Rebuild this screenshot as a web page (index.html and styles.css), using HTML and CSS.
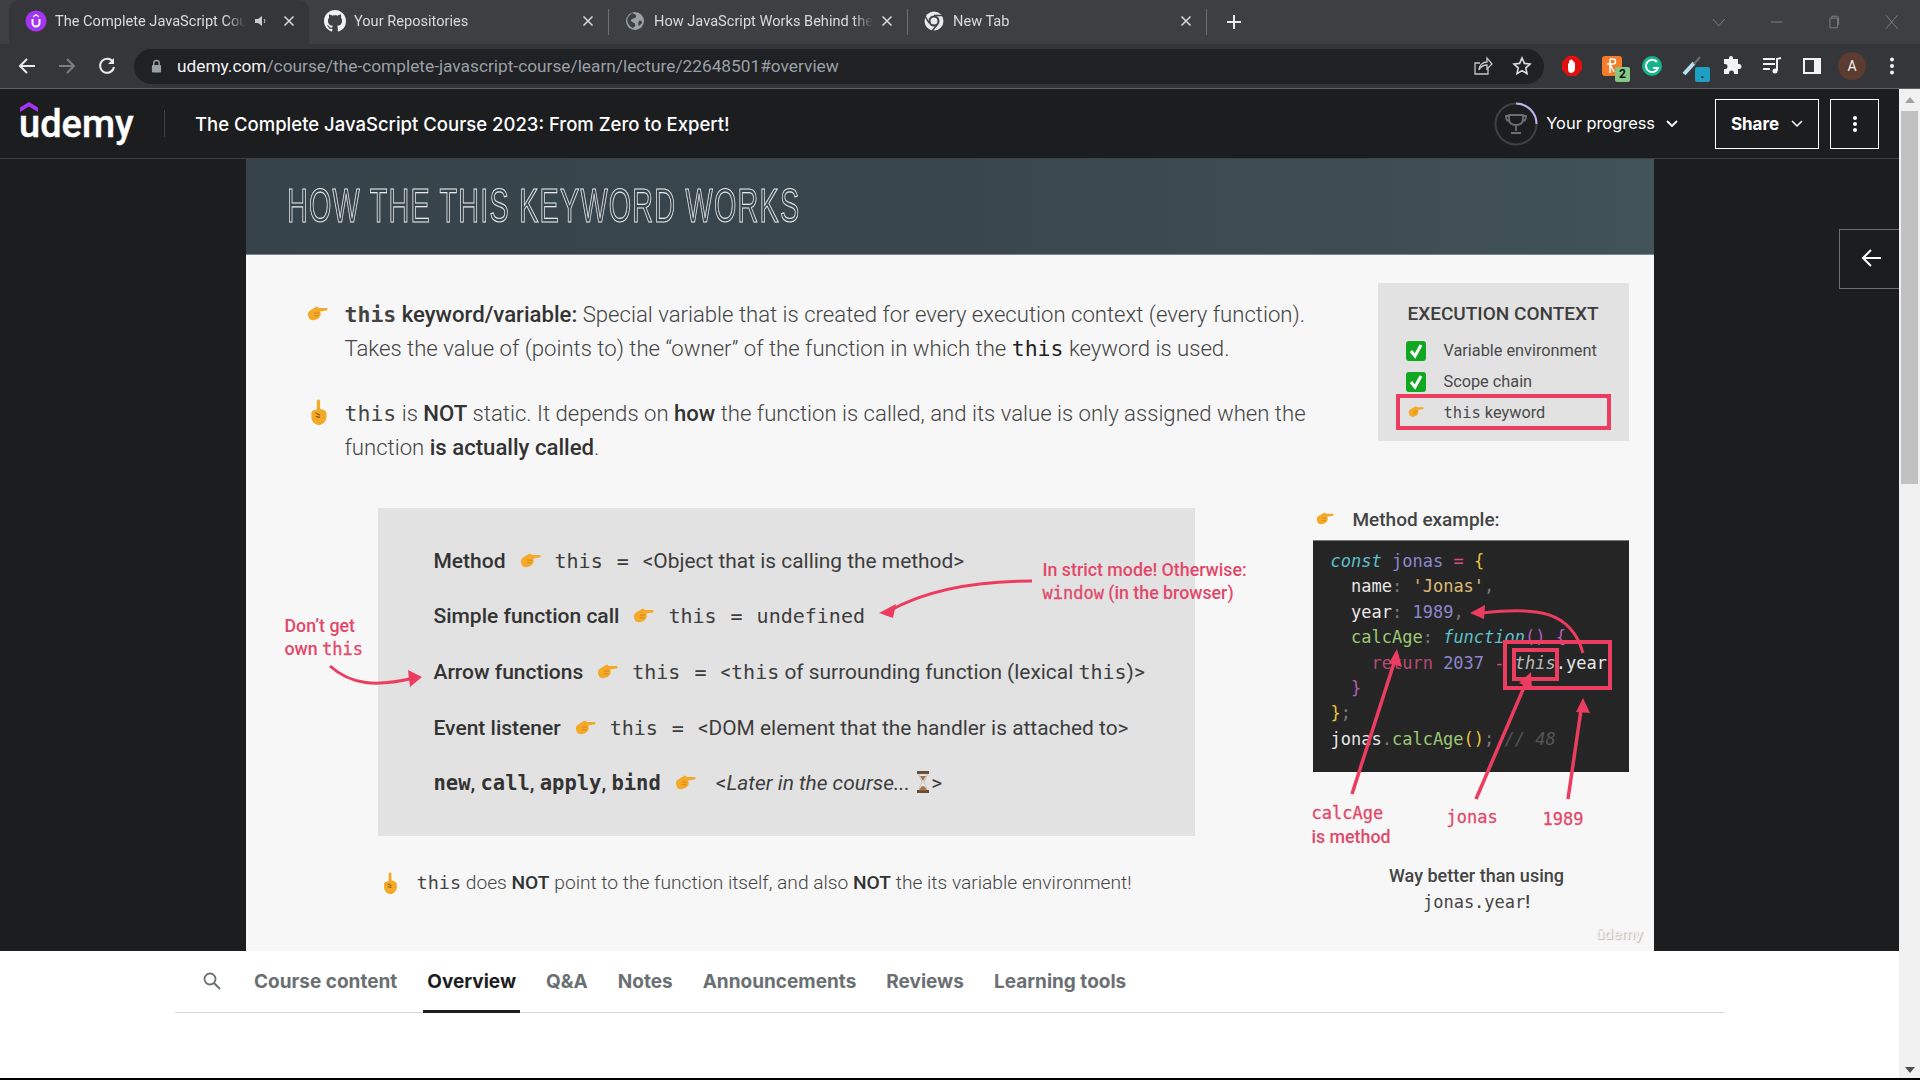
FILE: index.html
```html
<!DOCTYPE html>
<html>
  <head>
    <title>The Complete JavaScript Course</title>
    <link rel="stylesheet" href="styles.css">
  </head>
  <body>
    <svg class="sprites" width="0" height="0">
      <symbol id="handRight" viewBox="0 0 24 18">
        <path fill="#f4a928" d="M1 9c0-2 2-4 4-5l5-3c2-1 3 0 3 1l9 0c2 0 2 3 0 3l-7 1c1 2 1 5-1 7-2 2-5 3-8 3l-3-1c-1-2-2-4-2-6z"/>
        <path fill="none" stroke="#c97f12" stroke-width=".9" d="M8 8h6M8 11h5"/>
      </symbol>
      <symbol id="handUp" viewBox="0 0 16 24">
        <path fill="#f4a928" d="M6 2c0-2 3-2 3 0l0 7 3 1c3 1 3 3 3 6 0 4-3 8-7 8-4 0-6-3-7-6l0-5c0-2 2-3 5-3z"/>
        <path fill="none" stroke="#8a5a10" stroke-width="1.100" d="M5 13l4 2M5 16l4 1"/>
      </symbol>
      <symbol id="checkBox" viewBox="0 0 20 20">
        <rect width="20" height="20" rx="3" fill="#10a820"/>
        <path fill="none" stroke="#fff" stroke-width="3" d="M5 10l4 5 6-11"/>
      </symbol>
      <symbol id="closeX" viewBox="0 0 12 12">
        <path fill="none" stroke="currentColor" stroke-width="1.5" d="M1.500 1.500l9 9M10.500 1.500l-9 9"/>
      </symbol>
    </svg>

    <div class="tabStrip">
      <div class="tab tabActive">
        <svg class="tabIcon" viewBox="0 0 22 22"><circle cx="11" cy="11" r="10.500" fill="#a435f0"/><path fill="none" stroke="#fff" stroke-width="2" d="M7.500 9v4a3.500 3.500 0 0 0 7 0V9"/><path fill="#fff" d="M11 4l3 2v1.500l-3-2-3 2V6z"/></svg>
        <span class="tabTitle">The Complete JavaScript Cou</span>
        <svg class="tabSpeaker" viewBox="0 0 14 14"><path fill="#c8cacc" d="M1 5h3l4-3v10L4 9H1z"/><path fill="none" stroke="#c8cacc" d="M10 5c1 1 1 3 0 4"/></svg>
        <svg class="tabClose"><use href="#closeX"/></svg>
      </div>
      <div class="tab">
        <svg class="tabIcon" viewBox="0 0 16 16"><path fill="#f1f1f1" d="M8 0C3.580 0 0 3.580 0 8c0 3.540 2.290 6.530 5.470 7.590.4.070.55-.17.55-.38 0-.19-.01-.82-.01-1.490-2.010.37-2.530-.49-2.690-.94-.09-.23-.48-.94-.82-1.130-.28-.15-.68-.52-.01-.53.63-.01 1.080.58 1.230.82.720 1.210 1.870.87 2.330.66.070-.52.280-.87.510-1.070-1.780-.2-3.640-.89-3.640-3.950 0-.87.310-1.590.820-2.150-.08-.2-.36-1.020.08-2.120 0 0 .67-.21 2.200.82.640-.18 1.320-.27 2-.27s1.360.09 2 .27c1.530-1.040 2.200-.82 2.200-.82.440 1.100.16 1.920.08 2.120.51.560.820 1.270.820 2.150 0 3.070-1.870 3.750-3.650 3.950.290.25.540.73.540 1.480 0 1.070-.01 1.930-.01 2.200 0 .21.150.46.550.38A8.013 8.013 0 0 0 16 8c0-4.420-3.580-8-8-8z"/></svg>
        <span class="tabTitle">Your Repositories</span>
        <svg class="tabClose"><use href="#closeX"/></svg>
      </div>
      <div class="tabSep"></div>
      <div class="tab">
        <svg class="tabIcon" viewBox="0 0 22 22"><circle cx="11" cy="11" r="9" fill="#9aa0a6"/><path fill="#3c4043" d="M8 3c3 1 5 2 4 4s-4 1-5 3 3 2 4 4-1 3-2 4C5 16 2 12 4 7zM15 11c2-1 3 0 3 2l-3 3c-1-1-1-3 0-5z"/></svg>
        <span class="tabTitle">How JavaScript Works Behind the</span>
        <svg class="tabClose"><use href="#closeX"/></svg>
      </div>
      <div class="tabSep"></div>
      <div class="tab">
        <svg class="tabIcon" viewBox="0 0 22 22"><circle cx="11" cy="11" r="9.500" fill="#e8eaed"/><circle cx="11" cy="11" r="5.500" fill="#3c4043"/><circle cx="11" cy="11" r="3.500" fill="#e8eaed"/><path stroke="#3c4043" stroke-width="1.500" d="M11 5.500h9M6 13L2 6M14 15l-5 6"/></svg>
        <span class="tabTitle">New Tab</span>
        <svg class="tabClose"><use href="#closeX"/></svg>
      </div>
      <div class="tabSep"></div>
      <svg class="newTab" viewBox="0 0 16 16"><path stroke="#e8eaed" stroke-width="2" d="M8 1v14M1 8h14"/></svg>
      <div class="windowControls">
        <svg viewBox="0 0 14 14"><path fill="none" stroke="#7d8083" d="M1 4l6 7 6-7"/></svg>
        <svg viewBox="0 0 14 14"><path stroke="#7d8083" d="M1 7h12"/></svg>
        <svg viewBox="0 0 14 14"><path fill="none" stroke="#7d8083" d="M3 3h8v10H3zM5 3V1h6l1 1v8"/></svg>
        <svg viewBox="0 0 14 14"><path stroke="#7d8083" d="M1 0l12 14M13 0L1 14"/></svg>
      </div>
    </div>

    <div class="toolbar">
      <svg class="navIcon" viewBox="0 0 18 18"><path fill="none" stroke="#e8eaed" stroke-width="2" d="M17 9H3M9 2L2 9l7 7"/></svg>
      <svg class="navIcon" viewBox="0 0 18 18"><path fill="none" stroke="#7c7f82" stroke-width="2" d="M1 9h14M9 2l7 7-7 7"/></svg>
      <svg class="navIcon" viewBox="0 0 18 18"><path fill="none" stroke="#e8eaed" stroke-width="2" d="M15 5a7 7 0 1 0 1 5"/><path fill="#e8eaed" d="M16 1v6h-6z"/></svg>
      <div class="omnibox">
        <svg class="lockIcon" viewBox="0 0 12 14"><path fill="none" stroke="#9aa0a6" stroke-width="1.500" d="M3 6V4a3 3 0 0 1 6 0v2"/><rect x="1" y="6" width="10" height="8" rx="1" fill="#9aa0a6"/></svg>
        <span class="url"><span class="urlHost">udemy.com</span>/course/the-complete-javascript-course/learn/lecture/22648501#overview</span>
        <svg class="omniIcon omniShare" viewBox="0 0 20 20"><path fill="none" stroke="#c4c7c9" stroke-width="1.300" d="M15 12v6H2V7h5M6 14c0-5 4-8 8-8V2l5 6-5 5V9c-3 0-6 1-8 5z"/></svg>
        <svg class="omniIcon" viewBox="0 0 20 20"><path fill="none" stroke="#dcdee0" stroke-width="1.600" d="M10 2l2.400 5.400 5.600.6-4.200 3.800 1.200 5.800-5-3-5 3 1.200-5.800L2 8l5.600-.6z"/></svg>
      </div>
      <div class="extensions">
        <div class="ext"><svg viewBox="0 0 20 20"><path fill="#e20f0f" d="M6 0h8l6 6v8l-6 6H6l-6-6V6z"/><path fill="#fff" d="M6 8c0-1 1-1 1 0V5c0-1 1.500-1 1.500 0V4c0-1 1.500-1 1.500 0v1c0-1 1.500-1 1.500 0v2c0-1 1.500-1 1.500 0v6c0 2-2 4-4 4s-3-2-3-4z"/></svg></div>
        <div class="ext"><svg viewBox="0 0 20 20"><rect width="20" height="20" rx="3" fill="#f47c2a"/><path fill="none" stroke="#fff" stroke-width="1.500" d="M8 3v14M5 8h6a2 2 0 0 0 0-5H8M8 8l4 8"/></svg><span class="extBadge extBadgeGreen">2</span></div>
        <div class="ext"><svg viewBox="0 0 20 20"><circle cx="10" cy="10" r="10" fill="#15b58c"/><path fill="none" stroke="#fff" stroke-width="2" d="M15 6a6.200 6.200 0 1 0 1 6h-5"/></svg></div>
        <div class="ext"><svg viewBox="0 0 20 20"><path stroke="#b9dff0" stroke-width="4" d="M2 18L12 7"/><path stroke="#6a6f73" stroke-width="2" d="M12 8l6-7"/></svg><span class="extBadge extBadgeBlue">.</span></div>
        <div class="ext"><svg viewBox="0 0 20 20"><path fill="#f1f3f4" d="M7 2a2 2 0 0 1 4 0v1h5v5h1a2.500 2.500 0 0 1 0 5h-1v5h-4v-1a2.500 2.500 0 0 0-5 0v1H2v-5h1a2.500 2.500 0 0 0 0-5H2V3h5z"/></svg></div>
        <div class="ext"><svg viewBox="0 0 20 20"><path stroke="#f1f3f4" stroke-width="2" fill="none" d="M1 3h12M1 8h12M1 13h7M15 15V3l4-1"/><circle cx="13" cy="15" r="2.500" fill="#f1f3f4"/></svg></div>
        <div class="ext"><svg viewBox="0 0 20 20"><path fill="none" stroke="#f1f3f4" stroke-width="2" d="M2 3h16v14H2z"/><path fill="#f1f3f4" d="M12 3h6v14h-6z"/></svg></div>
        <div class="ext"><span class="avatar">A</span></div>
        <div class="ext"><svg viewBox="0 0 20 20"><circle cx="10" cy="3.500" r="2" fill="#f1f3f4"/><circle cx="10" cy="10" r="2" fill="#f1f3f4"/><circle cx="10" cy="16.500" r="2" fill="#f1f3f4"/></svg></div>
      </div>
    </div>

    <div class="page">
      <div class="pageMain">
        <header class="courseHeader">
          <div class="logo">
            <svg class="logoMark" viewBox="0 0 18 10"><path fill="#a435f0" d="M9 0l9 5.500V10L9 4.500 0 10V5.500z"/></svg>
            <span class="logoText">udemy</span>
          </div>
          <div class="headerDivider"></div>
          <div class="courseTitle">The Complete JavaScript Course 2023: From Zero to Expert!</div>
          <div class="progressRing">
            <svg viewBox="0 0 44 44" width="44" height="44">
              <circle cx="22" cy="22" r="20.500" fill="none" stroke="#3e4143" stroke-width="2"/>
              <path fill="none" stroke="#c0b2ea" stroke-width="2" d="M22 1.500A20.500 20.500 0 0 1 42.500 22"/>
              <path fill="none" stroke="#6a6f73" stroke-width="1.800" d="M15 13h14v4c0 4-3 6-7 6s-7-2-7-6zM15 14h-3c0 4 2 5 3 5M29 14h3c0 4-2 5-3 5M22 23v6M17 31h10"/>
            </svg>
          </div>
          <span class="progressLabel">Your progress</span>
          <svg class="chevron progressChevron" viewBox="0 0 12 8"><path fill="none" stroke="#fff" stroke-width="1.800" d="M1 1l5 5 5-5"/></svg>
          <button class="headerBtn shareBtn">Share <svg class="chevron shareChevron" viewBox="0 0 12 8"><path fill="none" stroke="#fff" stroke-width="1.500" d="M1 1l5 5 5-5"/></svg></button>
          <button class="headerBtn moreBtn"><svg viewBox="0 0 6 20" width="6" height="20"><circle cx="3" cy="4" r="2" fill="#fff"/><circle cx="3" cy="10" r="2" fill="#fff"/><circle cx="3" cy="16" r="2" fill="#fff"/></svg></button>
        </header>

        <div class="player">
          <div class="slide">
            <div class="slideHead"><h1 class="slideTitle">HOW THE THIS KEYWORD WORKS</h1></div>
            <div class="slideBody">
              <div class="slideLeft">
                <div class="point">
                  <svg class="pointHand"><use href="#handRight"/></svg>
                  <p><code class="strong">this</code> <b>keyword/variable:</b> Special variable that is created for every execution context (every function).<br>Takes the value of (points to) the “owner” of the function in which the <code class="medium">this</code> keyword is used.</p>
                </div>
                <div class="point point2">
                  <svg class="pointFinger"><use href="#handUp"/></svg>
                  <p><code>this</code> is <b>NOT</b> static. It depends on <b>how</b> the function is called, and its value is only assigned when the<br>function <b>is actually called</b>.</p>
                </div>

                <div class="rulesBox">
                  <div class="rule"><b>Method</b><svg class="ruleHand"><use href="#handRight"/></svg><code>this</code><code>=</code><span>&lt;Object that is calling the method&gt;</span></div>
                  <div class="rule"><b>Simple function call</b><svg class="ruleHand"><use href="#handRight"/></svg><code>this</code><code>=</code><code>undefined</code></div>
                  <div class="rule"><b>Arrow functions</b><svg class="ruleHand"><use href="#handRight"/></svg><code>this</code><code>=</code><span>&lt;<code>this</code> of surrounding function (lexical <code>this</code>)&gt;</span></div>
                  <div class="rule"><b>Event listener</b><svg class="ruleHand"><use href="#handRight"/></svg><code>this</code><code>=</code><span>&lt;DOM element that the handler is attached to&gt;</span></div>
                  <div class="rule"><b><code>new</code>, <code>call</code>, <code>apply</code>, <code>bind</code></b><svg class="ruleHand"><use href="#handRight"/></svg><span class="laterText">&lt;<i>Later in the course...</i>
                    <svg class="hourglass" viewBox="0 0 14 22"><path fill="#6b4a32" d="M1 0h12v3H1zM1 19h12v3H1z"/><path fill="#e9e9e9" stroke="#999" stroke-width=".5" d="M3 3h8c0 4-3 6-3 8s3 4 3 8H3c0-4 3-6 3-8S3 7 3 3z"/><path fill="#a9744a" d="M4 5h6l-3 5zM3.500 19c1-3 2-4 3.500-4s2.500 1 3.500 4z"/></svg>&gt;</span></div>
                </div>

                <div class="note">
                  <svg class="noteFinger"><use href="#handUp"/></svg>
                  <p><code>this</code> does <b>NOT</b> point to the function itself, and also <b>NOT</b> the its variable environment!</p>
                </div>
              </div>

              <div class="slideRight">
                <div class="execBox">
                  <div class="execTitle">EXECUTION CONTEXT</div>
                  <div class="execRow"><svg class="execIcon"><use href="#checkBox"/></svg>Variable environment</div>
                  <div class="execRow"><svg class="execIcon"><use href="#checkBox"/></svg>Scope chain</div>
                  <div class="execRow execRowMarked"><svg class="execHand"><use href="#handRight"/></svg><span><code>this</code> keyword</span></div>
                </div>

                <div class="methodHead"><svg class="methodHand"><use href="#handRight"/></svg>Method example:</div>
<pre class="codeBox"><i class="cyan">const</i> <span class="purple">jonas</span> <span class="pink">=</span> <span class="yellow">{</span>
  <span class="white">name</span><span class="dim">:</span> <span class="gold">'Jonas'</span><span class="dim">,</span>
  <span class="white">year</span><span class="dim">:</span> <span class="purple">1989</span><span class="dim">,</span>
  <span class="green">calcAge</span><span class="dim">:</span> <i class="cyan">function</i><span class="magenta">() {</span>
    <span class="rose">return</span> <span class="purple">2037</span> <span class="pink">-</span> <i class="grey">this</i><span class="white">.year</span>
  <span class="magenta">}</span>
<span class="yellow">}</span><span class="dim">;</span>
<span class="white">jonas</span><span class="dim">.</span><span class="green">calcAge</span><span class="yellow">()</span><span class="dim">;</span> <i class="comment">// 48</i></pre>
                <div class="betterNote">Way better than using<br><code>jonas.year</code>!</div>
              </div>

              <svg class="arrows" viewBox="0 0 1408 697" width="1408" height="697">
                <g fill="none" stroke="#ec3c60" stroke-width="3">
                  <path d="M786 326C730 326 680 335 643 356"/>
                  <path d="M84 411C105 430 130 432 168 423"/>
                  <path d="M1337 398C1325 355 1290 352 1236 358"/>
                  <path stroke-width="3.500" d="M1106 539L1148 408"/>
                  <path stroke-width="3.500" d="M1230 544L1279 430"/>
                  <path stroke-width="3.500" d="M1322 544L1335 455"/>
                  <path stroke-width="4" d="M1259 387h105v46h-105zM1268 395h43v29h-43z"/>
                </g>
                <g fill="#ec3c60">
                  <path d="M633 358l17-9-3 14z"/>
                  <path d="M176 422l-14-7 2 17z"/>
                  <path d="M1224 358l15-8-1 14z"/>
                  <path d="M1151 394l5 18-13-4z"/>
                  <path d="M1285 417l1 17-13-6z"/>
                  <path d="M1337 443l7 15-14-1z"/>
                </g>
              </svg>

              <div class="redNote dontGet">Don’t get<br>own <code>this</code></div>
              <div class="redNote strictNote">In strict mode! Otherwise:<br><code>window</code> (in the browser)</div>
              <div class="redNote calcNote"><code>calcAge</code><br>is method</div>
              <div class="redNote jonasNote"><code>jonas</code></div>
              <div class="redNote yearNote"><code>1989</code></div>
              <div class="watermark">ûdemy</div>
            </div>
          </div>
          <button class="sidebarToggle"><svg viewBox="0 0 20 20" width="20" height="20"><path fill="none" stroke="#fff" stroke-width="2" d="M20 10H2M10 2l-8 8 8 8"/></svg></button>
        </div>

        <nav class="courseTabs">
          <div class="courseTabsRow">
            <svg class="searchIcon" viewBox="0 0 20 20"><circle cx="8" cy="8" r="5.500" fill="none" stroke="#6a6f73" stroke-width="1.800"/><path stroke="#6a6f73" stroke-width="2" d="M12 12l6 6"/></svg>
            <a class="courseTab">Course content</a>
            <a class="courseTab courseTabActive">Overview</a>
            <a class="courseTab">Q&amp;A</a>
            <a class="courseTab">Notes</a>
            <a class="courseTab">Announcements</a>
            <a class="courseTab">Reviews</a>
            <a class="courseTab">Learning tools</a>
          </div>
        </nav>
      </div>

      <div class="scrollbar">
        <div class="scrollUp"></div>
        <div class="scrollThumb"></div>
        <div class="scrollDown"></div>
      </div>
    </div>
  </body>
</html>
```

FILE: styles.css
```css
* {
  box-sizing: border-box;
}
body {
  margin: 0;
  width: 1920px;
  height: 1080px;
  overflow: hidden;
  background-color: black;
  font-family: Roboto, Arial, sans-serif;
}
.sprites {
  position: absolute;
}
code, pre {
  font-family: "DejaVu Sans Mono", monospace;
}

/* browser chrome */
.tabStrip {
  display: flex;
  align-items: center;
  height: 44px;
  padding-left: 9px;
  background-color: #3c4043;
}
.tab {
  display: flex;
  align-items: center;
  width: 299px;
  height: 44px;
  padding-left: 15px;
  padding-right: 14px;
  padding-bottom: 2px;
  color: #d8dadc;
  font-size: 14.600px;
}
.tabActive {
  width: 300px;
  background-color: #35363a;
  border-radius: 10px 10px 0 0;
  padding-left: 16px;
}
.tabIcon {
  width: 22px;
  height: 22px;
  flex-shrink: 0;
}
.tabTitle {
  flex: 1;
  margin-left: 8px;
  white-space: nowrap;
  overflow: hidden;
  -webkit-mask-image: linear-gradient(to left, transparent 4px, black 24px);
}
.tabSpeaker {
  width: 14px;
  height: 14px;
  margin-left: 4px;
  margin-right: 11px;
}
.tabClose {
  width: 12px;
  height: 12px;
  margin-left: 4px;
  color: #d8dadc;
}
.tabSep {
  width: 1px;
  height: 26px;
  background-color: #6d7073;
}
.tab + .tabSep + .tab {
  width: 298px;
}
.newTab {
  width: 16px;
  height: 16px;
  margin-left: 19px;
}
.windowControls {
  display: flex;
  margin-left: auto;
  width: 230px;
}
.windowControls svg {
  width: 14px;
  height: 14px;
  margin-left: 22px;
  margin-right: 22px;
}
.toolbar {
  display: flex;
  align-items: center;
  height: 45px;
  padding-left: 7px;
  background-color: #35363a;
  border-bottom: 1px solid #5d5f62;
}
.navIcon {
  width: 18px;
  height: 18px;
  margin-left: 11px;
  margin-right: 11px;
}
.navIcon + .navIcon {
  margin-left: 11px;
}
.omnibox {
  display: flex;
  align-items: center;
  width: 1410px;
  height: 35px;
  margin-left: 7px;
  padding-left: 17px;
  padding-right: 12px;
  background-color: #202124;
  border-radius: 18px;
}
.lockIcon {
  width: 11px;
  height: 14px;
}
.url {
  flex: 1;
  margin-left: 15px;
  color: #9aa0a6;
  font-size: 17.300px;
  white-space: nowrap;
}
.urlHost {
  color: #f1f3f4;
}
.omniIcon {
  width: 20px;
  height: 20px;
}
.omniShare {
  margin-right: 19px;
}
.extensions {
  display: flex;
  margin-left: 8px;
}
.ext {
  position: relative;
  display: flex;
  align-items: center;
  justify-content: center;
  width: 40px;
  height: 36px;
}
.ext svg {
  width: 20px;
  height: 20px;
}
.extBadge {
  position: absolute;
  left: 23px;
  top: 19px;
  width: 15px;
  height: 15px;
  border-radius: 2px;
  color: #111;
  font-size: 12px;
  font-weight: bold;
  line-height: 15px;
  text-align: center;
}
.extBadgeGreen {
  background-color: #85c785;
}
.extBadgeBlue {
  background-color: #1f9fc4;
}
.avatar {
  width: 28px;
  height: 28px;
  border-radius: 50%;
  background-color: #5c3b31;
  color: #f1f3f4;
  font-size: 14px;
  line-height: 28px;
  text-align: center;
}

/* page */
.page {
  display: flex;
  height: 989px;
}
.pageMain {
  width: 1899px;
  background-color: white;
}
.courseHeader {
  display: flex;
  align-items: center;
  height: 70px;
  padding-left: 20px;
  background-color: #1c1d1f;
  border-bottom: 1px solid #3e4143;
  color: white;
}
.logo {
  position: relative;
  width: 113px;
  height: 44px;
}
.logoMark {
  position: absolute;
  left: 0;
  top: 0;
  width: 18px;
  height: 10px;
}
.logoText {
  position: absolute;
  left: -1px;
  top: -3px;
  font-size: 38px;
  font-weight: 500;
  line-height: 50px;
  -webkit-text-stroke: 0.4px white;
}
.headerDivider {
  width: 1px;
  height: 27px;
  margin-left: 31px;
  background-color: #3e4143;
}
.courseTitle {
  flex: 1;
  margin-left: 30px;
  font-size: 18.500px;
  font-weight: 500;
  font-family: Inter, Roboto, sans-serif;
}
.progressRing {
  width: 44px;
  height: 44px;
}
.progressLabel {
  margin-left: 8px;
  font-size: 16.400px;
  font-family: Inter, Roboto, sans-serif;
  margin-right: 11px;
  margin-bottom: 1px;
}
.chevron {
  width: 12px;
  height: 8px;
}
.progressChevron {
  margin-right: 37px;
}
.headerBtn {
  display: flex;
  align-items: center;
  height: 50px;
  padding: 0;
  background: none;
  border: 1px solid white;
  color: white;
  font-family: Inter, Roboto, sans-serif;
  font-size: 17px;
  font-weight: 700;
}
.shareBtn {
  justify-content: center;
  gap: 12px;
  width: 104px;
}
.moreBtn {
  justify-content: center;
  width: 49px;
  margin-left: 11px;
  margin-right: 20px;
}

.player {
  position: relative;
  height: 792px;
  background-color: #1c1d1f;
}
.sidebarToggle {
  position: absolute;
  right: 0;
  top: 70px;
  width: 60px;
  height: 60px;
  padding: 0 0 0 2px;
  background-color: #1c1d1f;
  border: 1px solid #6a6f73;
  border-right: none;
}

/* the slide */
.slide {
  width: 1408px;
  height: 792px;
  margin: 0 auto;
  background-color: #f7f7f7;
}
.slideHead {
  height: 96px;
  padding-top: 19px;
  padding-left: 41px;
  background: linear-gradient(to right, #36434a, #39464d 50%, #425259);
  border-bottom: 1px solid #7a868b;
  overflow: hidden;
}
.slideTitle {
  margin: 0;
  color: transparent;
  -webkit-text-stroke: 1.200px #e6e9ea;
  font-family: "Liberation Sans", sans-serif;
  font-size: 48px;
  font-weight: normal;
  line-height: 56px;
  letter-spacing: 2px;
  white-space: nowrap;
  transform: scaleX(0.6);
  transform-origin: left;
}
.slideBody {
  position: relative;
  display: flex;
  height: 696px;
  color: #444;
}
.slideLeft {
  width: 1067px;
  padding-top: 42px;
}
.point {
  display: flex;
  margin-left: 61px;
  width: 1006px;
  font-size: 22.150px;
  font-weight: 300;
  line-height: 34px;
}
.point p {
  margin: 0;
  width: 968px;
}
.point b, .note b {
  font-weight: 500;
  color: #333;
}
.point code {
  font-size: 21.500px;
  font-weight: 400;
  line-height: 1;
  color: #444;
}
.point code.strong {
  font-weight: bold;
}
.point code.medium {
  font-weight: 400;
  color: #222;
}
.point2 {
  margin-top: 31px;
}
.pointHand {
  width: 21px;
  height: 16px;
  margin-top: 9px;
  margin-right: 17px;
  flex-shrink: 0;
}
.pointFinger {
  width: 20px;
  height: 26px;
  margin-top: 3px;
  margin-left: 2px;
  margin-right: 16px;
  flex-shrink: 0;
}
.rulesBox {
  width: 817px;
  height: 328px;
  margin-top: 44px;
  margin-left: 132px;
  padding-top: 25px;
  padding-left: 56px;
  background-color: #e2e2e2;
}
.rule {
  display: flex;
  align-items: center;
  gap: 14px;
  height: 55.600px;
  font-size: 20.900px;
  color: #3d3d3d;
}
.rule b {
  font-size: 21px;
  font-weight: 500;
  color: #333;
}
.rule code {
  font-size: 20px;
}
.rule b code {
  font-weight: bold;
  font-size: 20.500px;
}
.laterText {
  margin-left: 6px;
}
.ruleHand {
  width: 21px;
  height: 16px;
  flex-shrink: 0;
}
.hourglass {
  width: 16px;
  height: 22px;
  vertical-align: -3px;
}
.note {
  display: flex;
  align-items: center;
  margin-top: 35px;
  margin-left: 136px;
  font-size: 19.200px;
  font-weight: 300;
}
.note p {
  margin: 0;
}
.note code {
  font-size: 18.500px;
  font-weight: 400;
}
.noteFinger {
  width: 17px;
  height: 22px;
  margin-right: 18px;
}
.slideRight {
  width: 316px;
  padding-top: 28px;
}
.execBox {
  width: 251px;
  height: 158px;
  margin-left: 65px;
  padding-top: 17px;
  background-color: #e2e2e2;
}
.execTitle {
  margin-bottom: 7px;
  font-size: 19px;
  font-weight: 500;
  line-height: 28px;
  text-align: center;
  color: #3d3d3d;
}
.execRow {
  display: flex;
  align-items: center;
  height: 31px;
  padding-left: 28px;
  font-size: 16.300px;
  color: #4a4a4a;
}
.execIcon {
  width: 20px;
  height: 20px;
  margin-right: 18px;
}
.execRowMarked {
  width: 215px;
  height: 36px;
  margin-top: -3px;
  margin-left: 18px;
  padding-left: 8px;
  border: 4px solid #ec3c60;
}
.execRowMarked code {
  font-size: 15.500px;
}
.execHand {
  width: 16px;
  height: 12px;
  margin-right: 20px;
}
.methodHead {
  display: flex;
  align-items: center;
  height: 26px;
  margin-top: 65px;
  padding-left: 3px;
  font-size: 19px;
  font-weight: 500;
  color: #444;
}
.methodHand {
  width: 18px;
  height: 14px;
  margin-right: 19px;
}
.codeBox {
  height: 232px;
  margin: 8px 0 0 0;
  padding: 8px 0 0 18px;
  background-color: #252526;
  border-top: 1px solid #777;
  font-size: 17px;
  line-height: 25.400px;
  color: #ddd;
}
.cyan { color: #5cc0c8; }
.purple { color: #8d85cc; }
.pink { color: #d9507e; }
.yellow { color: #e8c43a; }
.white { color: #e8e8e8; }
.dim { color: #7a7a7a; }
.gold { color: #dbbb72; }
.green { color: #9dc872; }
.magenta { color: #b45db8; }
.rose { color: #b84a72; }
.grey { color: #bbb; }
.comment { color: #555; }
.betterNote {
  margin-top: 91px;
  padding-left: 12px;
  font-size: 18px;
  font-weight: 500;
  line-height: 26px;
  text-align: center;
  color: #444;
}
.betterNote code {
  font-size: 17px;
  font-weight: 400;
}

/* drawn over the slide */
.arrows {
  position: absolute;
  left: 0;
  top: 0;
  pointer-events: none;
}
.redNote {
  position: absolute;
  color: #e2486a;
  font-size: 17.800px;
  font-weight: 500;
  line-height: 23px;
}
.redNote code {
  font-size: 17px;
  font-weight: 400;
  -webkit-text-stroke: 0.3px #e2486a;
}
.dontGet {
  left: 39px;
  top: 359px;
}
.strictNote {
  left: 797px;
  top: 303px;
}
.calcNote {
  left: 1066px;
  top: 546px;
}
.jonasNote {
  left: 1201px;
  top: 550px;
}
.yearNote {
  left: 1297px;
  top: 552px;
}
.watermark {
  position: absolute;
  right: 11px;
  bottom: 8px;
  color: #f2f2f2;
  font-size: 15.500px;
  font-weight: 500;
  text-shadow: 1px 1px 1px #bbb;
}

/* tabs under the player */
.courseTabs {
  height: 127px;
  padding-left: 175px;
}
.courseTabsRow {
  display: flex;
  align-items: flex-end;
  gap: 22px;
  width: 1549px;
  height: 62px;
  padding-left: 27px;
  border-bottom: 1px solid #d1d7dc;
}
.searchIcon {
  width: 20px;
  height: 20px;
  margin-bottom: 21px;
  margin-right: 6px;
}
.courseTab {
  height: 47px;
  margin-bottom: -1px;
  padding: 0 4px;
  color: #6a6f73;
  font-family: Inter, Roboto, sans-serif;
  font-size: 19px;
  font-weight: 700;
  line-height: 32px;
  white-space: nowrap;
}
.courseTabActive {
  color: #1c1d1f;
  border-bottom: 3px solid #1c1d1f;
}

.scrollbar {
  position: relative;
  width: 21px;
  height: 989px;
  background-color: #f1f1f1;
}
.scrollUp {
  position: absolute;
  left: 6px;
  top: 8px;
  border: 5px solid transparent;
  border-top: none;
  border-bottom: 6px solid #a3a3a3;
}
.scrollThumb {
  position: absolute;
  left: 2px;
  top: 22px;
  width: 17px;
  height: 373px;
  background-color: #c1c1c1;
}
.scrollDown {
  position: absolute;
  left: 6px;
  top: 978px;
  border: 5px solid transparent;
  border-bottom: none;
  border-top: 6px solid #505050;
}
```
